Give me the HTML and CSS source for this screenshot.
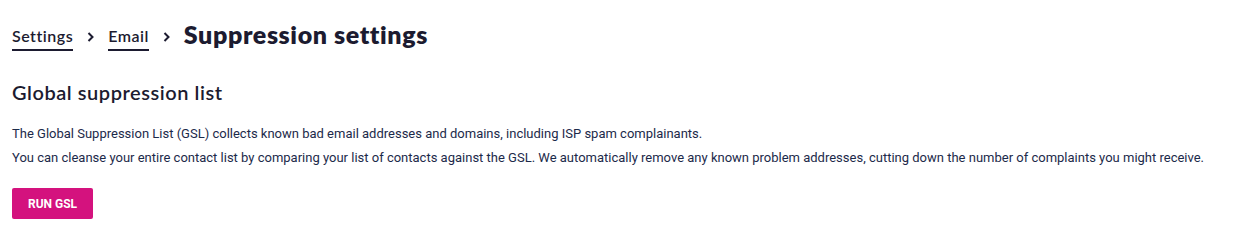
FILE: index.html
```html
<!DOCTYPE html>
<html>
<head>
<meta charset="utf-8">
<link rel="stylesheet" href="styles.css">
</head>
<body>
<div class="page">
  <nav class="crumbs">
    <a class="crumb" href="#">Settings</a>
    <span class="sep"><svg width="8" height="10" viewBox="0 0 8 10"><path d="M1.5 1 L5.5 5 L1.5 9" fill="none" stroke="#1c1b30" stroke-width="2"/></svg></span>
    <a class="crumb" href="#">Email</a>
    <span class="sep"><svg width="8" height="10" viewBox="0 0 8 10"><path d="M1.5 1 L5.5 5 L1.5 9" fill="none" stroke="#1c1b30" stroke-width="2"/></svg></span>
    <h1 class="title">Suppression settings</h1>
  </nav>
  <h2 class="section">Global suppression list</h2>
  <p class="text">The Global Suppression List (GSL) collects known bad email addresses and domains, including ISP spam complainants.</p>
  <p class="text">You can cleanse your entire contact list by comparing your list of contacts against the GSL. We automatically remove any known problem addresses, cutting down the number of complaints you might receive.</p>
  <button class="btn">RUN GSL</button>
</div>
</body>
</html>
```
FILE: styles.css
```css
html, body { margin: 0; padding: 0; background: #fff; }
.page { padding: 19px 12px; color: #1c1b30; }
.crumbs { display: flex; align-items: center; height: 32px; }
.crumb {
  font-family: Lato, sans-serif; font-size: 16px; font-weight: 600; letter-spacing: 0.5px;
  color: #1c1b30; text-decoration: none;
  border-bottom: 2px solid #1c1b30; padding-bottom: 4px; margin-top: 6px;
}
.sep { display: flex; align-items: center; margin: 0 13px 0 14px; padding-top: 4px; }
.title { font-family: Lato, sans-serif; font-size: 25px; font-weight: 800; letter-spacing: 0.6px; margin: 0 0 3px; color: #1c1b30; }
.section { font-family: Lato, sans-serif; font-size: 20px; font-weight: 600; letter-spacing: 0.55px; margin: 29px 0 22px; color: #1c1b30; }
.text { font-family: Roboto, sans-serif; font-size: 13px; line-height: 16px; margin: 0 0 8px; color: #1c2a4a; }
.btn {
  margin-top: 14px; background: #d4127e; color: #fff; border: 0; border-radius: 2px;
  font-family: Roboto, sans-serif; font-weight: 700; font-size: 12px;
  width: 81px; height: 31px; padding: 0;
}
```
